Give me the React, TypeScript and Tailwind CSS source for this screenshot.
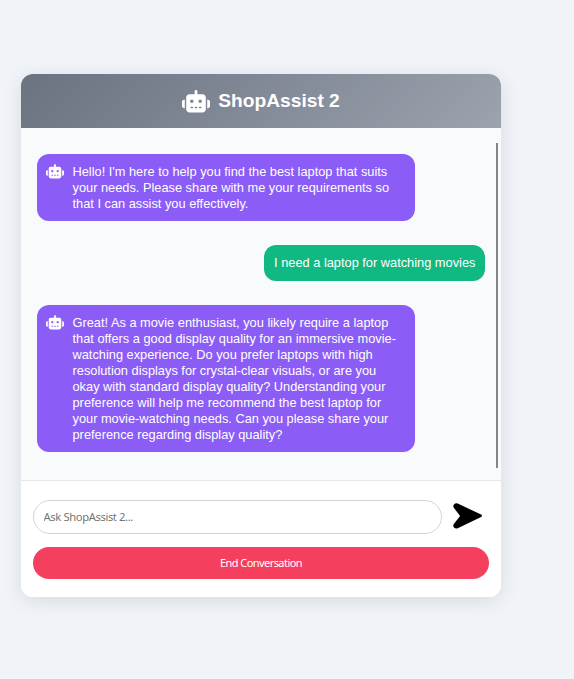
import { FaRobot } from "react-icons/fa6";

function BotMessage({ lines }: { lines: string[] }) {
  return (
    <div className="flex w-[378px] items-start rounded-xl bg-[#8b5cf6] py-[9.6px] pl-[9px] text-white">
      <FaRobot className="mt-[0.6px] h-[14.4px] w-[18px] shrink-0" />
      <p className="ml-[8.5px] text-[12.8px] leading-4 whitespace-nowrap">
        {lines.map((line) => (
          <span key={line} className="block">
            {line}
          </span>
        ))}
      </p>
    </div>
  );
}

function SendIcon() {
  return (
    <svg viewBox="0 0 30 26" className="h-[26px] w-[29.5px]" preserveAspectRatio="none" fill="#000">
      <path d="M4.8.6 28.6 11.5Q30.4 12.7 28.6 13.9L4.8 25.2Q2.6 26 1 24.4-.3 22.9.8 21.1L7.2 12.9.8 4.7Q-.3 2.9 1 1.4 2.6-.2 4.8.6Z" />
    </svg>
  );
}

export default function App() {
  return (
    <div className="min-h-[679px] bg-[#f0f4f8] pt-[74px] pl-[21px] font-['Liberation_Sans',Arial,sans-serif]">
      <div className="flex h-[523px] w-[480px] flex-col overflow-hidden rounded-xl bg-white shadow-[0_4px_20px_rgba(0,0,0,0.1)]">
        <header className="flex h-[54px] shrink-0 items-center justify-center bg-linear-135 from-[#6b7280] to-[#9ca3af] text-white">
          <FaRobot className="mt-px h-[22.4px] w-[28px]" />
          <h1 className="ml-2 text-[19.2px] leading-none font-bold">ShopAssist 2</h1>
        </header>
        <main className="flex h-[352px] shrink-0 bg-[#f9fafc]">
          <div className="flex w-[464px] flex-col gap-6 pt-[26px] pl-4">
            <BotMessage
              lines={[
                "Hello! I'm here to help you find the best laptop that suits",
                "your needs. Please share with me your requirements so",
                "that I can assist you effectively.",
              ]}
            />
            <div className="self-end rounded-xl bg-[#10b981] px-[9.6px] py-[10px] text-[12.8px] leading-4 whitespace-nowrap text-white">
              I need a laptop for watching movies
            </div>
            <BotMessage
              lines={[
                "Great! As a movie enthusiast, you likely require a laptop",
                "that offers a good display quality for an immersive movie-",
                "watching experience. Do you prefer laptops with high",
                "resolution displays for crystal-clear visuals, or are you",
                "okay with standard display quality? Understanding your",
                "preference will help me recommend the best laptop for",
                "your movie-watching needs. Can you please share your",
                "preference regarding display quality?",
              ]}
            />
          </div>
          <div className="mt-[15px] ml-[11px] h-[325px] w-0.5 bg-[#858585]" />
        </main>
        <footer className="flex-1 border-t border-[#e5e7eb] bg-white px-3 pt-[19px] font-['Noto_Sans',sans-serif]">
          <div className="flex">
            <input
              placeholder="Ask ShopAssist 2..."
              className="h-[34px] w-[409px] rounded-full border border-[#d1d5db] px-[9.6px] pb-0.5 text-[11.2px] tracking-[-0.38px] placeholder:text-[#757575]"
            />
            <button aria-label="Send" className="mt-[3px] ml-[11px] self-start">
              <SendIcon />
            </button>
          </div>
          <button className="mt-[13px] h-8 w-[456px] rounded-full bg-[#f43f5e] text-[11px] tracking-[-0.56px] text-white">
            End Conversation
          </button>
        </footer>
      </div>
    </div>
  );
}
